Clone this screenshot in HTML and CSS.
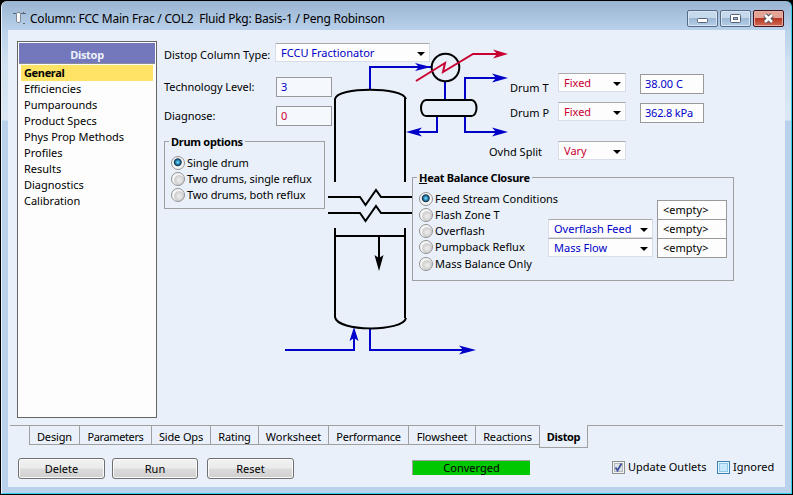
FILE: index.html
```html
<!DOCTYPE html>
<html lang="en">
<head>
<meta charset="utf-8">
<title>Column: FCC Main Frac</title>
<link rel="stylesheet" href="styles.css">
</head>
<body>
<div class="window">
  <header class="titlebar">
    <svg class="app-icon" width="15" height="16" viewBox="0 0 15 16"><rect x="3.5" y="2.500" width="4" height="10" rx="1.500" fill="#fff" stroke="#7d8894"/><path d="M0 3.500h3M8 3.500h5M10 2.500h1M10 13.500h2" stroke="#5b6674" fill="none"/></svg>
    <h1 class="title">Column: FCC Main Frac / COL2&nbsp; Fluid Pkg: Basis-1 / Peng Robinson</h1>
    <div class="controls">
      <button class="ctl" aria-label="Minimize"><svg width="29" height="15"><rect x="9.5" y="7.5" width="10" height="4" rx="1" fill="#fff" stroke="#566173"/></svg></button>
      <button class="ctl" aria-label="Maximize"><svg width="29" height="15"><rect x="9.5" y="3.5" width="10" height="8" rx="1" fill="#fff" stroke="#566173"/><rect x="12.5" y="6.5" width="4" height="2" fill="#a9c2dc" stroke="#566173"/></svg></button>
      <button class="ctl close" aria-label="Close"><svg width="29" height="15"><path d="M11 4l7 7M18 4l-7 7" stroke="#59505d" stroke-width="4.6"/><path d="M11 4l7 7M18 4l-7 7" stroke="#fff" stroke-width="2.6"/></svg></button>
    </div>
  </header>
  <main class="client">
    <div class="page">
      <nav class="sidebar">
        <h2 class="side-head">Distop</h2>
        <ul class="side-list">
          <li class="active">General</li><li>Efficiencies</li><li>Pumparounds</li><li>Product Specs</li><li>Phys Prop Methods</li><li>Profiles</li><li>Results</li><li>Diagnostics</li><li>Calibration</li>
        </ul>
      </nav>
      <section class="form">
        <svg class="diagram" width="260" height="330" viewBox="270 40 260 330" fill="none">
          <g stroke="#0000c8" stroke-width="2">
            <path d="M370 90V67H431M445 81V99M465 99V78H504M465 116V132H504M437 116V132H410M285 350H354V332M370 328V350H472"/>
          </g>
          <g fill="#0000c8">
            <path d="M431 67L415 63L419 67L415 71Z"/><path d="M508 78L492 73.500L496 78L492 82.500Z"/><path d="M508 132L492 127.500L496 132L492 136.500Z"/><path d="M406 132L422 127.500L418 132L422 136.500Z"/><path d="M354 327L349.500 341L354 338L358.500 341Z"/><path d="M476 350L459 345.500L463 350L459 354.500Z"/>
          </g>
          <g stroke="#000" stroke-width="2">
            <path d="M335 182V99C337 86.500 403 86.500 406 99M405 98V182"/>
            <path d="M335 228V317C337 332 403 332 406 318M405 228V318M335 236H405M379 236V262"/>
            <path d="M328 197H360L365.500 205L376 190L381 197H413M328 213H360L365.500 221L376 206L381 213H413"/>
            <rect x="421" y="100" width="55.500" height="16" rx="5" ry="8"/>
            <circle cx="445.500" cy="67.500" r="13.800"/>
          </g>
          <path d="M379 271L374.500 255L379 258L383.500 255Z" fill="#000"/>
          <g stroke="#c80032" stroke-width="2"><path d="M416 81L445 63L443 72L473 54H504"/></g>
          <path d="M508 54L493 49.500L497 54L493 58.500Z" fill="#c80032"/>
        </svg>
        <div class="col-left">
          <div class="row type-row"><label class="lbl">Distop Column Type:</label><div class="combo wide">FCCU Fractionator</div></div>
          <div class="row"><label class="lbl">Technology Level:</label><div class="field num">3</div></div>
          <div class="row"><label class="lbl">Diagnose:</label><div class="field num red">0</div></div>
          <div class="group drum">
            <span class="legend">Drum options</span>
            <label class="radio on">Single drum</label>
            <label class="radio">Two drums, single reflux</label>
            <label class="radio">Two drums, both reflux</label>
          </div>
        </div>
        <div class="col-right">
          <div class="drow"><label>Drum T</label><div class="combo red">Fixed</div><div class="field">38.00 C</div></div>
          <div class="drow"><label>Drum P</label><div class="combo red">Fixed</div><div class="field kpa">362.8 kPa</div></div>
          <div class="drow split"><label>Ovhd Split</label><div class="combo red">Vary</div></div>
          <div class="group heat">
            <span class="legend"><u>H</u>eat Balance Closure</span>
            <div class="radios">
              <label class="radio on">Feed Stream Conditions</label>
              <label class="radio">Flash Zone T</label>
              <label class="radio">Overflash</label>
              <label class="radio">Pumpback Reflux</label>
              <label class="radio last">Mass Balance Only</label>
            </div>
            <div class="combos"><div class="combo over">Overflash Feed</div><div class="combo">Mass Flow</div></div>
            <div class="empties"><div class="field">&lt;empty&gt;</div><div class="field">&lt;empty&gt;</div><div class="field">&lt;empty&gt;</div></div>
          </div>
        </div>
      </section>
    </div>
    <nav class="tabs">
      <span class="tab w50">Design</span><span class="tab w72">Parameters</span><span class="tab w59">Side Ops</span><span class="tab w48">Rating</span><span class="tab w70">Worksheet</span><span class="tab w80">Performance</span><span class="tab w67">Flowsheet</span><span class="tab w64">Reactions</span><span class="tab current">Distop</span>
    </nav>
    <footer class="actions">
      <button class="btn">Delete</button><button class="btn run">Run</button><button class="btn reset">Reset</button>
      <div class="status">Converged</div>
      <label class="check"><svg width="13" height="13"><rect x=".5" y=".5" width="12" height="12" fill="#f4f4f4" stroke="#8e8f8f"/><rect x="2.500" y="2.500" width="8" height="8" fill="#dfe2e6" stroke="#b4b8be"/><path d="M3.500 6.500L5.500 9.500L9.500 2.500" fill="none" stroke="#42539a" stroke-width="1.900"/></svg>Update Outlets</label>
      <label class="check ignored"><svg width="13" height="13"><rect x=".5" y=".5" width="12" height="12" fill="#e4f6fe" stroke="#3c7fb1"/><rect x="2.500" y="2.500" width="8" height="8" fill="#c6e9fb" stroke="#8fc8e8"/></svg>Ignored</label>
    </footer>
  </main>
</div>
</body>
</html>
```

FILE: styles.css
```css
* { box-sizing: border-box; }
body {
  margin: 0;
  width: 793px;
  height: 495px;
  overflow: hidden;
  background: #000;
  font: 11px/16px "Noto Sans", "Open Sans", sans-serif;
  color: #000;
}
.window {
  width: 791px;
  height: 493px;
  margin: 1px 0 0 1px;
  border: solid #35d1ec;
  border-width: 0 1px 1px 0;
  border-left: 1px solid #eaf3fb;
  border-radius: 6px 6px 0 0;
  padding: 0 6px 6px;
  background: linear-gradient(#99b3d1 0, #b9d1ea 29px, #cfe0f0 60px, #dce8f4 119px, #b9d1ea 120px);
}
.titlebar { display: flex; height: 29px; align-items: flex-start; padding: 0 1px 0 3px; }
.app-icon { margin: 9px 0 0 2px; flex: none; }
.title { margin: 9px 0 0 2px; font-size: 12px; line-height: 18px; font-weight: 400; white-space: nowrap; letter-spacing: -.23px; flex: 1; }
.controls { display: flex; gap: 2px; padding-top: 9px; }
.ctl { width: 31px; height: 17px; padding: 0; border: 1px solid #566b88; border-radius: 2px; background: linear-gradient(#c6d8eb 0 45%, #9db8d5 50%, #b5cfe9); box-shadow: inset 0 0 0 1px #d8e6f4; }
.ctl svg { display: block; }
.close { border-color: #43111b; background: linear-gradient(#e3a495 0 45%, #b93524 50%, #d06d52); box-shadow: inset 0 0 0 1px #e8b0a3; }
.client { height: 457px; width: 777px; background: #e9f0fa; }
.page { display: flex; height: 395px; padding: 11px 0 0 9px; }
.sidebar { width: 140px; height: 377px; border: 1px solid #666; padding: 1px; background: #fdfdfd; flex: none; }
.side-head { margin: 0; height: 21px; background: #7378bd; color: #edf2fa; font-size: 11px; line-height: 23px; text-align: center; font-weight: 700; letter-spacing: -.3px; border-bottom: 1px solid #8c8c98; }
.side-list { list-style: none; margin: 0; padding: 1px 2px 2px; }
.side-list li { height: 16px; line-height: 16px; padding-left: 3px; }
.side-list .active { background: #ffe365; font-weight: 700; letter-spacing: -.35px; }
.form { position: relative; display: flex; padding-left: 7px; }
.diagram { position: absolute; left: 113px; top: -1px; }
.col-left { width: 248px; flex: none; position: relative; }
.row { display: flex; height: 20px; margin-bottom: 9px; }
.type-row { height: 19px; margin: 2px 0 15px; }
.lbl { width: 112px; line-height: 20px; flex: none; white-space: nowrap; letter-spacing: -.04px; }
.type-row .lbl { width: 111px; line-height: 24px; }
.combo { position: relative; width: 68px; height: 19px; padding-left: 5px; line-height: 18px; background: #fdfdfd; border: 1px solid #d8dee8; border-top-color: #aaa; color: #0000c8; white-space: nowrap; flex: none; }
.combo::after { content: ""; position: absolute; right: 4px; top: 8px; border: solid transparent; border-width: 4px 4px 0; border-top-color: #000; }
.wide { padding-left: 5px; width: 155px; }
.field { width: 64px; height: 20px; padding-left: 4px; line-height: 17px; background: #fdfdfd; border: 1px solid #999; color: #0000c8; white-space: nowrap; flex: none; }
.kpa { letter-spacing: -.2px; }
.num { width: 56px; background: #f5f8fc; }
.red { color: #c80032; }
.field.red { color: #c80032; }
.group { position: relative; border: 1px solid #a0a0a0; }
.legend { position: absolute; left: 4px; top: -8px; padding: 0 2px; background: #e9f0fa; font-weight: 700; white-space: nowrap; line-height: 16px; letter-spacing: -.28px; }
.drum { width: 161px; height: 68px; margin-top: 15px; padding: 13px 0 0 6px; }
.drum .radio { letter-spacing: -.09px; }
.radio { display: flex; align-items: center; height: 16px; gap: 4px; white-space: nowrap; }
.radio::before { content: ""; width: 12px; height: 12px; margin-right: -2px; border-radius: 50%; border: 1px solid #929292; background: radial-gradient(circle at 60% 60%, #f0f0f0, #cfcfcf 45%, #f6f6f6 56%); flex: none; }
.radio.on::before { background: radial-gradient(circle at 48% 44%, #8fe0fa 0, #2f9acb 18%, #12344f 38%, #f4f4f4 48%); }
.col-right { width: 322px; flex: none; padding-top: 32px; position: relative; }
.drow { display: flex; height: 20px; margin-bottom: 9px; padding-left: 98px; }
.drow label { width: 48px; line-height: 29px; flex: none; white-space: nowrap; }
.drow + .drow label { line-height: 22px; }
.drow .field { margin: 1px 0 0 14px; }
.split { margin-top: 19px; padding-left: 77px; }
.split label { width: 69px; }
.heat { width: 322px; height: 104px; margin-top: 16px; display: flex; }
.radios { width: 135px; padding: 13px 0 0 6px; }
.radio.last { margin-top: 1px; }
.combos { width: 109px; padding-top: 41px; }
.combos .combo { width: 105px; padding-left: 5px; }
.empties { padding-top: 22px; }
.empties .field { width: 70px; color: #000; padding-left: 5px; margin-bottom: -1px; line-height: 18px; }
.tabs { display: flex; height: 24px; margin: 0 2px; padding-left: 19px; border-top: 1px solid #a0a0a0; }
.tab { width: 50px; height: 19px; border: solid #a0a0a0; border-width: 0 0 1px 1px; text-align: center; line-height: 22px; white-space: nowrap; letter-spacing: -.15px; }
.w72 { width: 72px; letter-spacing: -.4px; } .w59 { width: 59px; } .w48 { width: 48px; } .w70 { width: 70px; letter-spacing: 0; } .w80 { width: 80px; letter-spacing: -.25px; } .w67 { width: 67px; } .w64 { width: 64px; }
.current { width: 49px; height: 23px; margin-top: -1px; background: #e9f0fa; border-right-width: 1px; font-weight: 700; line-height: 23px; letter-spacing: -.35px; }
.actions { display: flex; padding: 9px 0 0 10px; }
.btn { width: 87px; height: 21px; border: 1px solid #707070; border-radius: 3px; padding: 0; margin-right: 7px; font: inherit; background: linear-gradient(#f2f2f2, #ebebeb 48%, #dcdcdc 52%, #cfcfcf); box-shadow: inset 0 0 0 1px #fafafa; }
.run { width: 86px; margin-right: 9px; }
.reset { margin-right: 118px; }
.status { width: 118px; height: 15px; margin-top: 2px; background: #00c800; border: solid #a0a0a0; border-width: 1px 0 0 1px; text-align: center; line-height: 14px; }
.check { display: flex; gap: 3px; margin: 0 0 0 82px; height: 18px; align-items: center; white-space: nowrap; width: 105px; }
.check svg { flex: none; }
.ignored { margin-left: 0; width: 60px; letter-spacing: 0; }
```
